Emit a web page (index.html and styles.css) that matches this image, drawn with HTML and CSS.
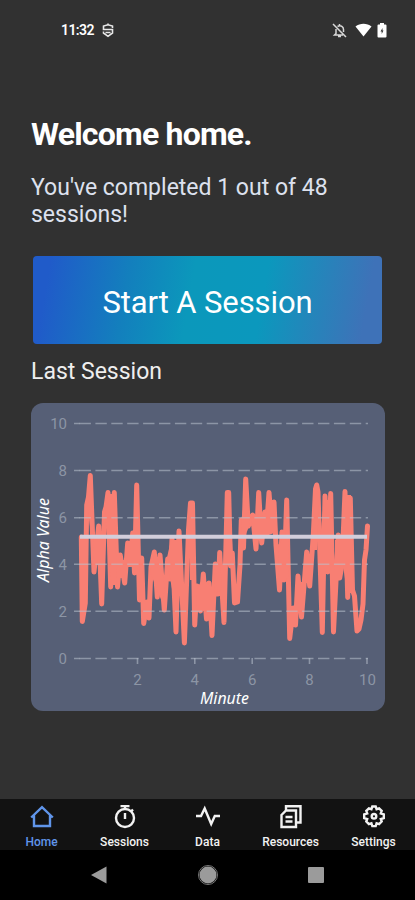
FILE: index.html
```html
<!DOCTYPE html>
<html lang="en">
<head>
    <meta charset="UTF-8">
    <meta name="viewport" content="width=device-width, initial-scale=1.0">
    <title>Home</title>
    <link rel="stylesheet" href="styles.css">
</head>
<body>
    <div class="status-bar">
        <span class="clock">11:32</span>
        <svg class="shield" width="12" height="15" viewBox="0 0 12 15" fill="none" stroke="#e8e8e8" stroke-width="1.6">
            <path d="M6 .5v2M10.500 5V3L6 1.800 1.500 3v3.500h9V10L6 13.300 1.500 10V8.500M3.500 9.500h5"/>
        </svg>
        <svg class="bell" width="15" height="15" viewBox="0 0 15 15" fill="none" stroke="#d8d8d8" stroke-width="1.500">
            <path d="M1 1l13 13M4 6v4.500L2.500 12H11M5.500 3.500C9 1.500 11.500 4 11.500 6.500V9M6 13.600h3M7.500 1v2"/>
        </svg>
        <svg class="wifi" width="17" height="14" viewBox="0 0 17 14" fill="#fff">
            <path d="M.5 3.500C5-.2 12-.2 16.500 3.500L8.500 13.500z"/>
        </svg>
        <svg width="10" height="15" viewBox="0 0 10 15">
            <path fill="#fff" d="M3 0h4v1.500h1.500q1 0 1 1v11q0 1-1 1h-7q-1 0-1-1v-11q0-1 1-1H3z"/>
            <path fill="#333" d="M5.500 5 3.500 8.500h1.200V11L6.500 7.500H5.500z"/>
        </svg>
    </div>

    <main class="content">
        <h1 class="title">Welcome home.</h1>
        <p class="progress">You've completed 1 out of 48 sessions!</p>
        <button class="start-btn">Start A Session</button>
        <h2 class="subtitle">Last Session</h2>
        <div class="chart-card">
            <svg class="chart" width="354" height="308" viewBox="31 403 354 308">
                <polyline class="series" points="81.300,537 82.300,621.500 85.300,603 86.700,505 88.500,497 90.300,475.500 94,572 98.700,526 101.700,604 104.500,512 106,507 108,492.500 110.700,587 114.300,492.500 117.500,587 120.200,555 124.700,583 127.700,543 130.700,558 132.700,533 134.500,573 136.700,485 139.500,600 141.700,558 143.700,623.500 147,602 149,618 151,567 154.300,552 157.300,597 160,555 164.300,610 167.700,559 170,579 172,539 176,632 179,531 184.400,643 188.500,530 190.500,503 192.500,503 194.700,625 197,586 200.500,611 203.300,574 206.500,619 209,583 212,635.500 215.300,564 218,594 219.700,552.500 224,622.500 227.300,492.500 228.700,492.500 230.500,566 232.300,553 234.500,603 237.500,602 240,565 241.300,520 243.500,548 245.700,479 248.300,526 252.700,515 256,549 258.700,492.500 261.700,543 265,512 266.500,528 269,492.500 271.500,525 274,502 276,545 279.500,590 282,532 284,580 286.700,500 289.700,638.500 293.300,608 295.500,625 298,576 301.500,617 306.700,552 309.700,586 313.300,535 315.500,489 316.700,485 318,492 322.300,632.500 325,496 327.700,572 330.700,493.500 333.500,632 338.300,535 339.700,578 342,565 345,491.500 347.700,597.500 350.300,498 352.500,590 354.500,596 357,631 359,629 361,620 363,604 364.500,560 366,550 367.500,526"/>
                <!-- dense stretches where neighbouring samples run together -->
                <path class="series-fill" d="M88 505h5l1 55-6-50zM94 535h5v30h-5zM105 510l3-16h6l3 91h-6zM118 560h6v18h-6zM128 545h10v22h-10zM139 560h3l3 42h-5zM150 572l4-17 6 3 5 30-3 14-8-20zM166 562l5-22h8v60h-5l-4-22zM190 505h3l1 75h-4zM196 590l7-12 7 8v25h-13zM214 567l6-8 2 30-7 5zM226 500h4l3 60-8 6zM241 522l6-38 3 40-8 20zM251 517h11l4-5 2-16 7 8 2 28-22 8zM278 545l7-10 3-30 1 72-10 8zM290 612h5v14h-5zM296 582h6v30h-6zM304 565h8v18h-8zM320 540l4-40h7l4 70h-15zM335 540h5v32h-5zM343 515l3-20h5l3 98h-7l-4-28zM314 500h5l-2 50h-5zM358 622l6-25v15l-5 18z"/>
                <g class="grid">
                    <path d="M74 423.500h6M74 470.500h6M74 517.700h6M74 564.300h6M74 611.300h6M74 658.500h6"/>
                    <path class="dashes" d="M79.500 423.500H368M79.500 470.500H368M79.500 517.700H368M79.500 564.300H368M79.500 611.300H368M79.500 658.500H368"/>
                    <path d="M137.500 658v6M194.800 658v6M252.200 658v6M309.500 658v6M367 658v6"/>
                </g>
                <path class="average" d="M80 536.800H367"/>
                <g class="ticks ticks-y">
                    <text x="67" y="429">10</text>
                    <text x="67" y="476">8</text>
                    <text x="67" y="523">6</text>
                    <text x="67" y="570">4</text>
                    <text x="67" y="617">2</text>
                    <text x="67" y="664">0</text>
                </g>
                <g class="ticks ticks-x">
                    <text x="137.500" y="685">2</text>
                    <text x="194.800" y="685">4</text>
                    <text x="252.200" y="685">6</text>
                    <text x="309.500" y="685">8</text>
                    <text x="367.500" y="685">10</text>
                </g>
                <text class="axis" x="224.500" y="704" textLength="49" lengthAdjust="spacingAndGlyphs">Minute</text>
                <text class="axis" transform="translate(49 540) rotate(-90)" textLength="84" lengthAdjust="spacingAndGlyphs">Alpha Value</text>
            </svg>
        </div>
    </main>

    <nav class="tab-bar">
        <a class="tab active">
            <svg width="24" height="24" viewBox="0 0 24 24">
                <path d="M1.200 12.500 12 2.200l10.800 10.300M4 10.500V21h16V10.500"/>
            </svg>
            <span>Home</span>
        </a>
        <a class="tab">
            <svg width="24" height="24" viewBox="0 0 24 24">
                <circle cx="12" cy="13" r="9"/>
                <path d="M7.500 1h9M12 1v4M12 8v6M18 6.500l2-2"/>
            </svg>
            <span>Sessions</span>
        </a>
        <a class="tab">
            <svg width="24" height="24" viewBox="0 0 24 24">
                <path d="M0 11h5L8.700 3.500l6.500 15.500L18.800 11H24"/>
            </svg>
            <span>Data</span>
        </a>
        <a class="tab">
            <svg width="24" height="24" viewBox="0 0 24 24">
                <path d="M7 5V1.300h14.500V17.500H18M2.500 10 7 5.500h10V22H2.500zM6.500 12h7M6.500 16.500h7"/>
            </svg>
            <span>Resources</span>
        </a>
        <a class="tab">
            <svg width="24" height="24" viewBox="0 0 24 24">
                <path d="M10.300 1.500h3.400l.9 2.700 2.500-.9 2.600 2.600-.9 2.500 3 .9v3.800l-3 .9.900 2.500-2.600 2.600-2.500-.9-.9 2.900h-3.400l-.9-2.900-2.500.9-2.600-2.600.9-2.500-3-.9V9.300l3-.9-.9-2.500 2.600-2.600 2.500.9z"/>
                <circle cx="12" cy="11.300" r="2.300"/>
            </svg>
            <span>Settings</span>
        </a>
    </nav>

    <div class="system-nav">
        <svg width="18" height="20" viewBox="0 0 18 20"><path d="M1 10 16.500 1.500v17z"/></svg>
        <svg width="22" height="22" viewBox="0 0 22 22">
            <circle class="ring" cx="11" cy="11" r="9.500"/>
            <circle cx="11" cy="11" r="8.500"/>
        </svg>
        <svg width="18" height="18" viewBox="0 0 18 18"><rect x="1" y="1" width="16" height="16" rx="1"/></svg>
    </div>
</body>
</html>
```

FILE: styles.css
```css
* {
    box-sizing: border-box;
}

body {
    margin: 0;
    height: 900px;
    display: flex;
    flex-direction: column;
    background-color: #313131;
    color: #fff;
    font-family: Roboto, "Liberation Sans", sans-serif;
}

.status-bar {
    height: 60px;
    padding: 0 28px 0 61px;
    display: flex;
    align-items: center;
}

.clock {
    font-size: 14px;
    font-weight: 600;
    letter-spacing: -0.6px;
}

.shield {
    margin-left: 8px;
}

.bell {
    margin-left: auto;
}

.wifi {
    margin: 0 5px 0 8px;
}

.content {
    flex: 1;
    padding: 55px 30px 0 31px;
}

.title {
    margin: 0;
    font-size: 32px;
    line-height: 38px;
    font-weight: 700;
    letter-spacing: -0.8px;
}

.progress {
    margin: 21px 0 0;
    font-size: 23px;
    line-height: 27px;
    color: #dde1ee;
}

.start-btn {
    display: block;
    width: 349px;
    height: 88px;
    margin: 28px 0 0 2px;
    padding: 4px 0 0;
    border: none;
    border-radius: 4px;
    background: linear-gradient(100deg, #205bc9 5%, #137fbd 27%, #0b98bb 45%, #0b98bd 65%, #3e72b8 94%);
    color: #fff;
    font-family: inherit;
    font-size: 31px;
    letter-spacing: -0.1px;
}

.subtitle {
    margin: 14px 0 0;
    font-size: 23px;
    line-height: 27px;
    font-weight: 400;
    color: #eee;
}

.chart-card {
    height: 308px;
    margin-top: 18px;
    border-radius: 12px;
    background-color: #565f76;
}

.chart {
    display: block;
}

.series {
    fill: none;
    stroke: #f87f73;
    stroke-width: 5;
    stroke-linecap: round;
    stroke-linejoin: round;
}

.series-fill {
    fill: #f87f73;
}

.grid {
    fill: none;
    stroke: #b9c1cd;
    stroke-opacity: 0.55;
    stroke-width: 1.6;
}

.dashes {
    stroke-dasharray: 11.4 4.5;
}

.average {
    stroke: #d2cedb;
    stroke-width: 4;
}

.ticks {
    fill: #8c95a5;
    font-size: 15px;
}

.ticks-y {
    text-anchor: end;
}

.ticks-x {
    text-anchor: middle;
}

.axis {
    fill: #fff;
    font-family: "Noto Sans", sans-serif;
    font-size: 16px;
    font-style: italic;
    text-anchor: middle;
}

.tab-bar {
    height: 51px;
    display: flex;
    background-color: #121212;
}

.tab {
    width: 83px;
    padding-top: 6px;
    display: flex;
    flex-direction: column;
    align-items: center;
    gap: 6px;
    color: #f2f2f2;
    font-size: 12px;
    line-height: 15px;
    font-weight: 500;
}

.tab svg {
    fill: none;
    stroke: currentColor;
    stroke-width: 2.4;
}

.tab.active {
    color: #6095ea;
}

.system-nav {
    height: 50px;
    padding: 0 90px;
    display: flex;
    align-items: center;
    justify-content: space-between;
    background-color: #000;
}

.system-nav svg {
    fill: #9b9b9b;
}

.system-nav .ring {
    fill: none;
    stroke: #777;
    stroke-width: 1;
}
```
